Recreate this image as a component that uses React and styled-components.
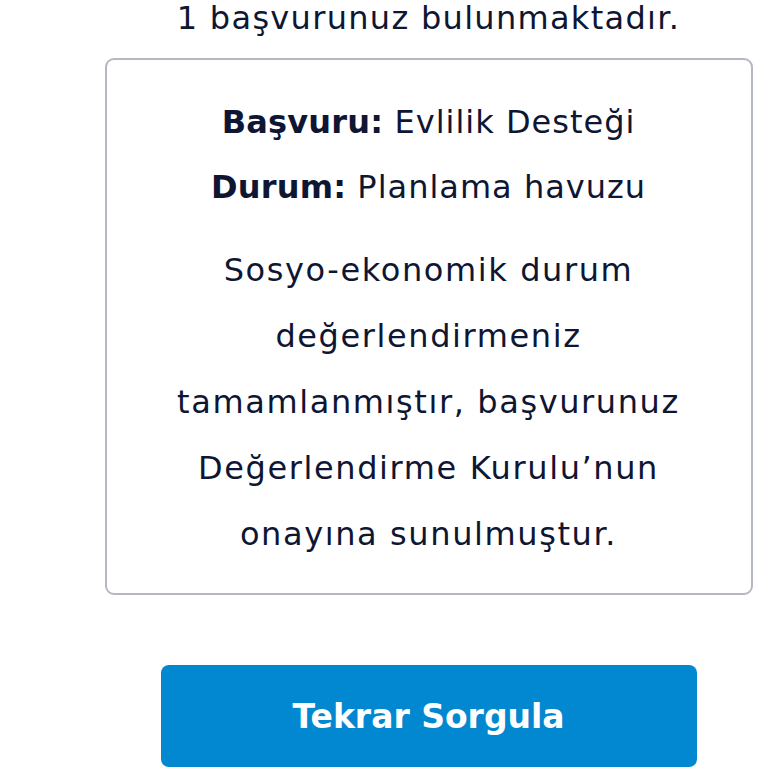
import React from 'react'
import styled, { createGlobalStyle } from 'styled-components'

const GlobalStyle = createGlobalStyle`
  html, body {
    margin: 0;
    padding: 0;
    background: #ffffff;
  }
  body {
    font-family: "DejaVu Sans", "Open Sans", sans-serif;
    color: #0e1633;
  }
`

const Page = () => {
  return (
    <PageStyled>
      <GlobalStyle />
      <CountStyled>1 başvurunuz bulunmaktadır.</CountStyled>
      <CardStyled>
        <InfoRowStyled>
          <strong>Başvuru:</strong> Evlilik Desteği
        </InfoRowStyled>
        <InfoRowStyled>
          <strong>Durum:</strong> Planlama havuzu
        </InfoRowStyled>
        <MessageStyled>
          Sosyo-ekonomik durum
          <br />
          değerlendirmeniz
          <br />
          tamamlanmıştır, başvurunuz
          <br />
          Değerlendirme Kurulu’nun
          <br />
          onayına sunulmuştur.
        </MessageStyled>
      </CardStyled>
      <ButtonStyled>Tekrar Sorgula</ButtonStyled>
    </PageStyled>
  )
}

const PageStyled = styled.div`
  width: 768px;
  height: 768px;
  overflow: hidden;
  display: flex;
  flex-direction: column;
  align-items: center;
`

const CountStyled = styled.p`
  margin: 0;
  width: 100%;
  padding-left: 89px;
  box-sizing: border-box;
  text-align: center;
  font-size: 32px;
  line-height: 36px;
  letter-spacing: 1.3px;
  font-weight: 400;
`

const CardStyled = styled.div`
  box-sizing: border-box;
  width: 648px;
  height: 537px;
  margin-top: 22px;
  margin-left: 89px;
  border: 2px solid #b4b8c0;
  border-radius: 9px;
  padding: 41px 6px 0;
  display: flex;
  flex-direction: column;
  align-items: center;
`

const InfoRowStyled = styled.p`
  margin: 0 0 23px;
  font-size: 32px;
  line-height: 42px;
  letter-spacing: 1px;
  text-align: center;
  white-space: nowrap;

  strong {
    font-weight: 700;
    letter-spacing: 0.2px;
  }
`

const MessageStyled = styled.p`
  margin: 0;
  margin-top: 6px;
  font-size: 32px;
  line-height: 66px;
  letter-spacing: 1.6px;
  text-align: center;
  white-space: nowrap;
`

const ButtonStyled = styled.button`
  box-sizing: border-box;
  width: 536px;
  height: 102px;
  margin-top: 70px;
  margin-left: 89px;
  border: none;
  border-radius: 8px;
  background-color: #0288d1;
  color: #ffffff;
  font-family: "DejaVu Sans", "Open Sans", sans-serif;
  font-size: 33px;
  font-weight: 700;
`

export default Page
